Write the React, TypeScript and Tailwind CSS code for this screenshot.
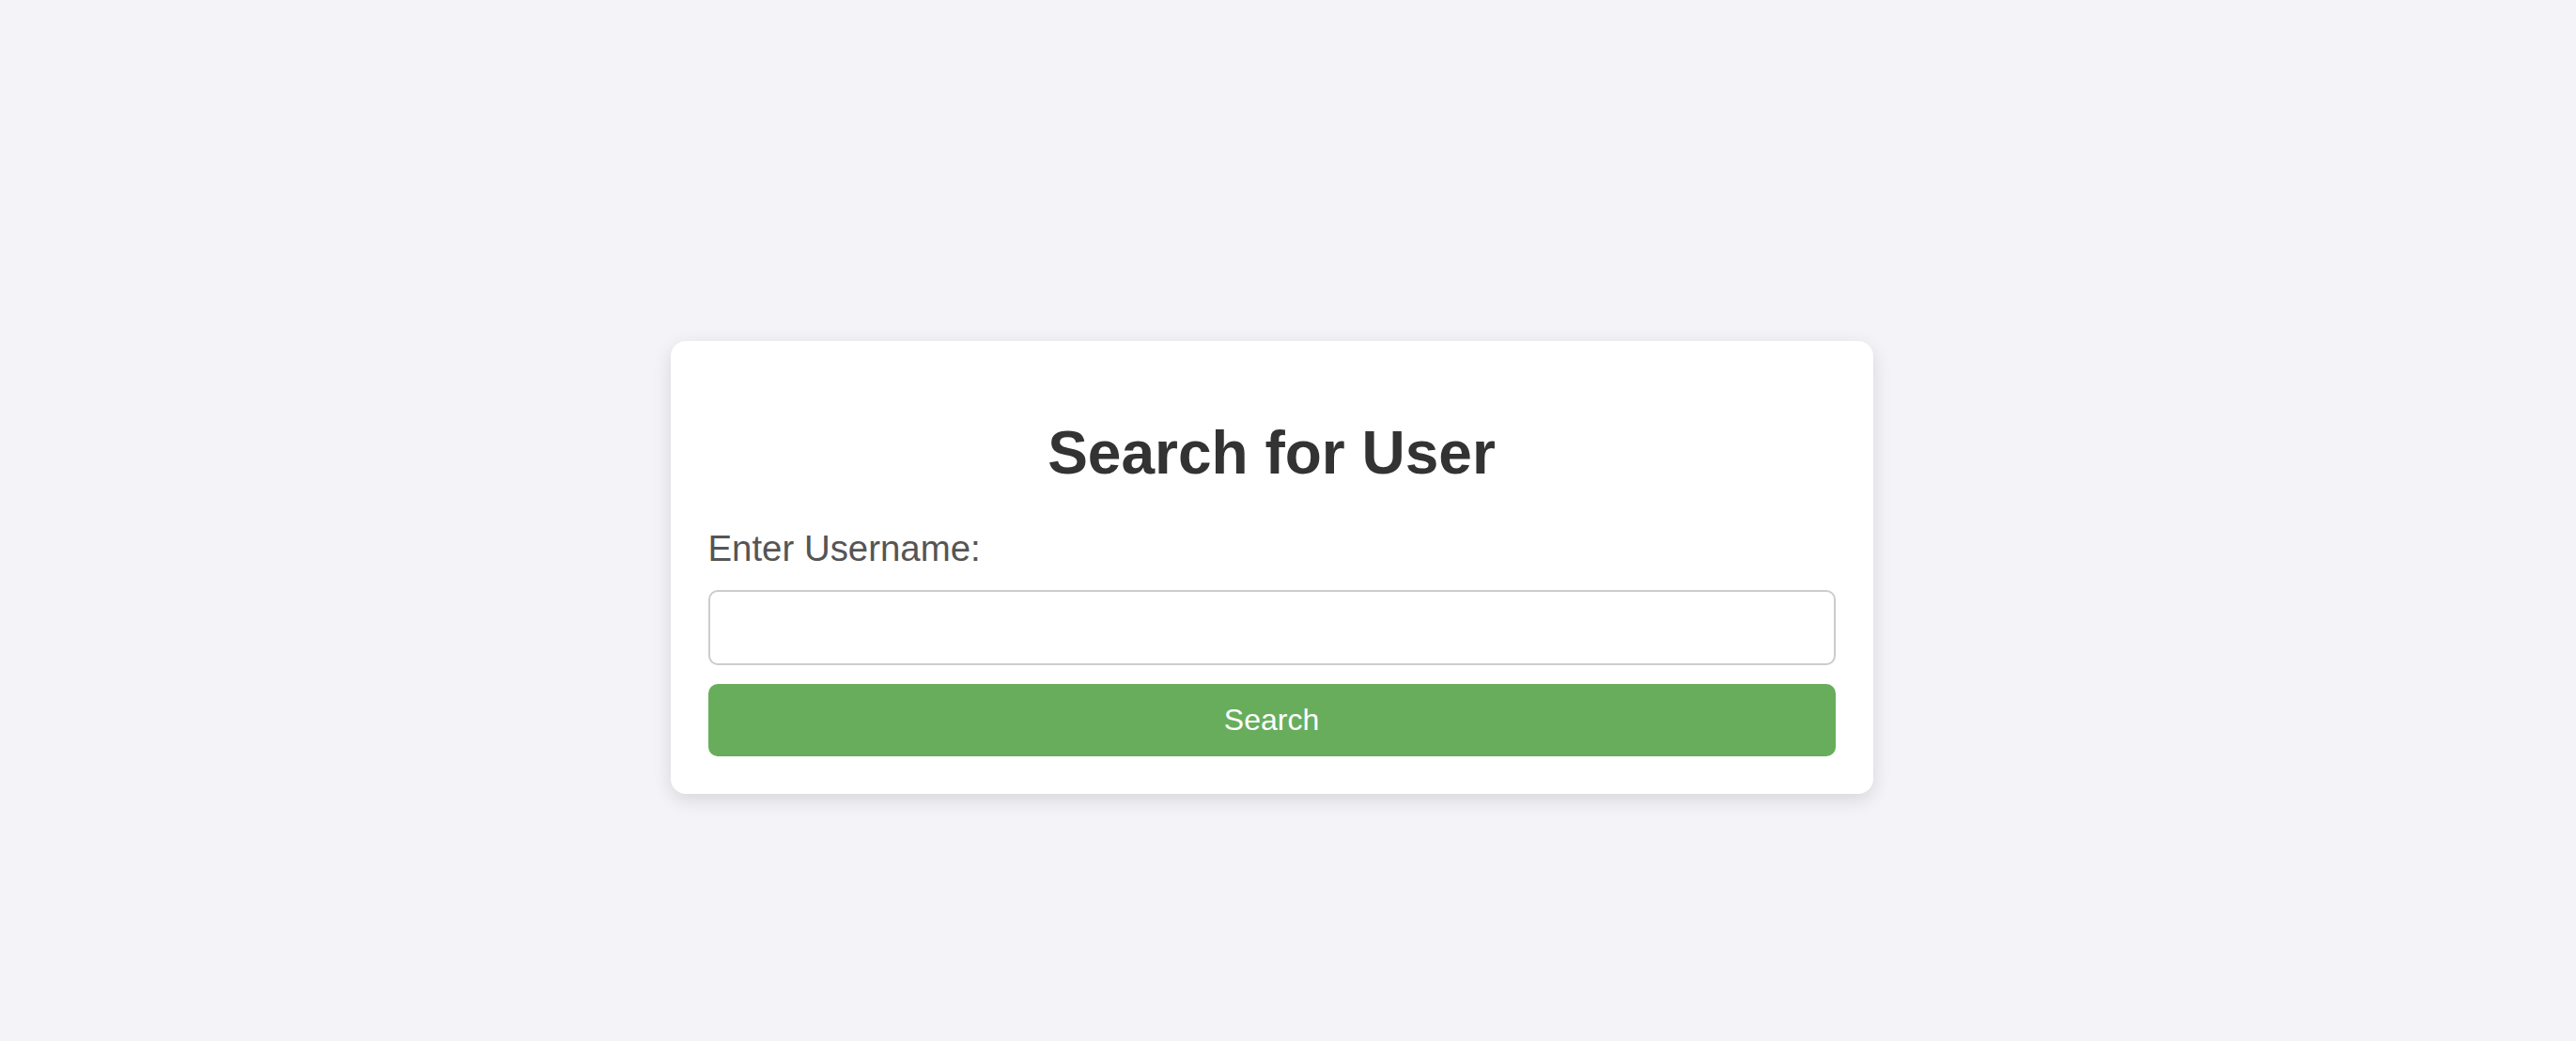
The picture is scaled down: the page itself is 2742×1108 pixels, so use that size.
import { useState } from 'react';

export default function App() {
  const [username, setUsername] = useState('');

  return (
    <div
      className="min-h-[1108px] w-full bg-[#f4f4f8] flex items-center justify-center pt-[100px] pr-[35px]"
      style={{ fontFamily: '"Liberation Sans", Arial, Helvetica, sans-serif' }}
    >
      <div className="w-[1280px] bg-white rounded-[16px] px-[40px] pt-[40px] pb-[40px] shadow-[0_6px_20px_rgba(0,0,0,0.12)]">
        <h2 className="mt-[43px] mb-[43px] text-center text-[64px] font-bold leading-[1.15] text-[#333]">
          Search for User
        </h2>
        <label htmlFor="username" className="block text-[38.4px] leading-[1.1] text-[#555] mb-[23px]">
          Enter Username:
        </label>
        <input
          id="username"
          type="text"
          value={username}
          onChange={(e) => setUsername(e.target.value)}
          className="block w-full h-[80px] px-[20px] text-[32px] border-[2px] border-[#ccc] rounded-[10px] bg-white outline-none"
        />
        <button
          type="button"
          className="mt-[20px] w-full h-[77px] rounded-[10px] bg-[#68ad5c] text-white text-[32px] leading-none"
        >
          Search
        </button>
      </div>
    </div>
  );
}
